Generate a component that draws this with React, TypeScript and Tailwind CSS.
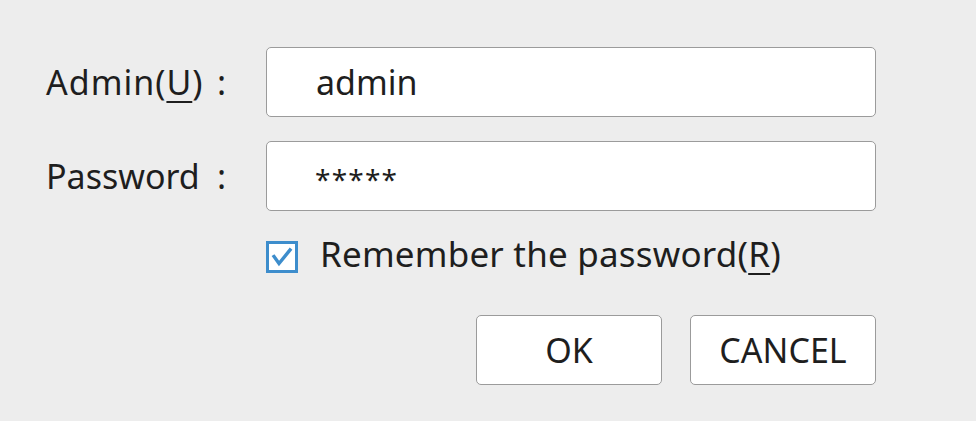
import React, { useState } from "react";

const FONT = { fontFamily: '"Noto Sans", "Noto Sans CJK SC", sans-serif' };

const CheckBox: React.FC<{ checked: boolean; onToggle: () => void }> = ({
  checked,
  onToggle,
}) => (
  <button
    onClick={onToggle}
    className="w-[32px] h-[32px] shrink-0 border-[3px] border-[#3d8dcc] bg-white flex items-center justify-center"
  >
    {checked && (
      <svg width="26" height="26" viewBox="0 0 26 26">
        <path
          d="M5 12.5 L10 19.5 L21 6"
          fill="none"
          stroke="#3d8dcc"
          strokeWidth="3.4"
          strokeLinecap="square"
          strokeLinejoin="miter"
        />
      </svg>
    )}
  </button>
);

const Label: React.FC<{ children: React.ReactNode; wide?: boolean }> = ({
  children,
  wide,
}) => (
  <div className="w-[180px] mr-[40px] flex justify-between">
    <span className={wide ? "tracking-[1px]" : ""}>{children}</span>
    <span>:</span>
  </div>
);

const App: React.FC = () => {
  const [user, setUser] = useState("admin");
  const [remember, setRemember] = useState(true);

  return (
    <div
      className="w-[976px] h-[421px] bg-[#ededed] text-[#1e1e1e] text-[34px] pt-[47px] pl-[46px]"
      style={FONT}
    >
      <div className="flex items-center">
        <Label wide>
          Admin(<u className="underline-offset-[6px] decoration-2">U</u>)
        </Label>
        <input
          value={user}
          onChange={(e) => setUser(e.target.value)}
          className="w-[610px] h-[70px] bg-white border border-[#9b9b9b] rounded-[5px] pl-[49px] outline-none"
        />
      </div>

      <div className="flex items-center mt-[24px]">
        <Label>Password</Label>
        <div className="w-[610px] h-[70px] bg-white border border-[#9b9b9b] rounded-[5px] pl-[48px] pt-[6px] flex items-center text-[28px] tracking-[1.2px]">
          *****
        </div>
      </div>

      <div className="flex items-center h-[32px] mt-[30px] pl-[220px] gap-[22px]">
        <CheckBox checked={remember} onToggle={() => setRemember(!remember)} />
        <span className="leading-none -mt-[7px] text-[35px] tracking-[0.2px] whitespace-nowrap">
          Remember the password(
          <u className="underline-offset-[6px] decoration-2">R</u>)
        </span>
      </div>

      <div className="flex justify-end gap-[28px] mt-[42px] w-[830px]">
        <button className="w-[186px] h-[70px] bg-white border border-[#9b9b9b] rounded-[5px]">
          OK
        </button>
        <button className="w-[186px] h-[70px] bg-white border border-[#9b9b9b] rounded-[5px]">
          CANCEL
        </button>
      </div>
    </div>
  );
};

export default App;
